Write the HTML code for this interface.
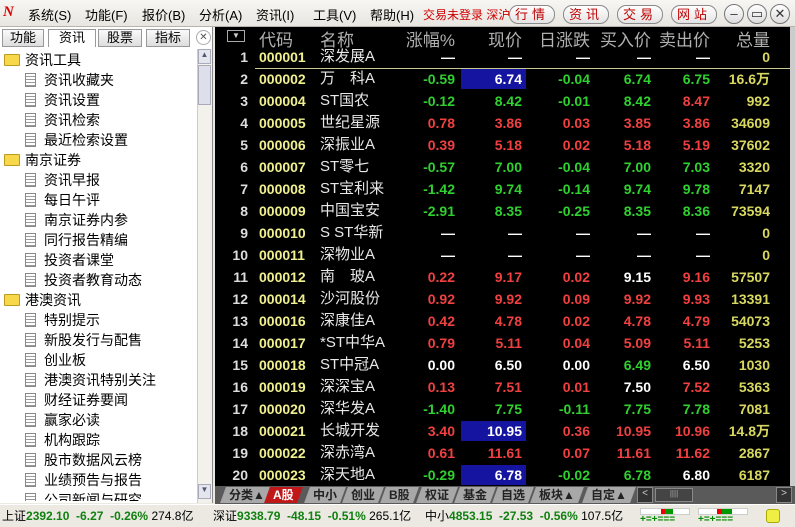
<!DOCTYPE html>
<html><head><meta charset="utf-8"><style>
*{margin:0;padding:0;box-sizing:border-box}
body{width:795px;height:526px;overflow:hidden;background:#ece9e3;font-family:"Liberation Sans","Noto Sans CJK SC",sans-serif;position:relative}
.a{position:absolute;white-space:nowrap}
#top{left:0;top:0;width:795px;height:27px;background:linear-gradient(#f7f6f3,#e8e6e0);border-bottom:1px solid #b8b4aa}
.menu{top:5px;font-size:13px;color:#000}
.btn{top:5px;height:19px;border:1px solid #8a8a8a;border-radius:9px;background:linear-gradient(#fff,#e4e4e4);font-size:13px;color:#c00000;text-align:center;line-height:17px;letter-spacing:4px}
.circ{top:4px;width:20px;height:20px;border:1px solid #777;border-radius:50%;background:linear-gradient(#fff,#ddd);text-align:center;font-size:13px;line-height:18px;color:#333}
#left{left:0;top:27px;width:213px;height:476px;background:#fff;border-right:1px solid #888}
.tab{top:2px;height:18px;border:1px solid #999;background:linear-gradient(#fafafa,#ddd);font-size:13px;text-align:center;line-height:16px}
.tr{font-size:14px;color:#000;height:20px;line-height:20px}
.fold{display:inline-block;width:16px;height:12px;background:#f7d84a;border:1px solid #b99a1c;border-radius:1px;vertical-align:-1px;margin-right:5px}
.doc{display:inline-block;width:11px;height:14px;border:1px solid #888;background:repeating-linear-gradient(#fff 0 2px,#999 2px 3px);vertical-align:-2px;margin-right:8px}
#tbl{left:215px;top:27px;width:575px;height:459px;background:#000}
.h{top:-1px;font-size:17px;color:#b0b0b0}
.r{font-size:14px;font-weight:bold;height:22px;line-height:22px}
.g{color:#30d030}.rd{color:#f04040}.w{color:#fff}.y{color:#d8d860}.cy{color:#f0f090}.nm{color:#e8e8e8;font-weight:normal;font-size:15px}
.bl{background:#1414a0}
#tabs{left:215px;top:486px;width:580px;height:18px;background:#5a5a5a}
.bt{top:1px;height:16px;background:#a8a8a8;font-size:12px;font-weight:bold;color:#222;line-height:16px;padding:0 6px;transform:skewX(-20deg)}
.bt span{display:inline-block;transform:skewX(20deg)}
#st{left:0;top:504px;width:795px;height:22px;background:#ece9e3;border-top:1px solid #fff;font-size:12px;line-height:22px}
.sg{color:#108010;font-weight:bold}
</style></head><body>
<div id="top" class="a"></div>
<div class="a" style="left:3px;top:4px;font:bold italic 15px 'Liberation Serif';color:#d00">N</div>
<div class="a menu" style="left:28px">系统(S)</div>
<div class="a menu" style="left:85px">功能(F)</div>
<div class="a menu" style="left:142px">报价(B)</div>
<div class="a menu" style="left:199px">分析(A)</div>
<div class="a menu" style="left:256px">资讯(I)</div>
<div class="a menu" style="left:313px">工具(V)</div>
<div class="a menu" style="left:370px">帮助(H)</div>
<div class="a menu" style="left:423px;color:#d00000;font-size:12px;top:6px">交易未登录 深沪</div>
<div class="a btn" style="left:509px;width:46px">行情</div>
<div class="a btn" style="left:563px;width:46px">资讯</div>
<div class="a btn" style="left:617px;width:46px">交易</div>
<div class="a btn" style="left:671px;width:46px">网站</div>
<div class="a circ" style="left:724px">–</div>
<div class="a circ" style="left:747px">▭</div>
<div class="a circ" style="left:770px">✕</div>

<div id="left" class="a">
<div class="a tab" style="left:2px;width:42px">功能</div>
<div class="a tab" style="left:48px;width:48px;background:#fff;border-bottom:none">资讯</div>
<div class="a tab" style="left:98px;width:44px">股票</div>
<div class="a tab" style="left:146px;width:44px">指标</div>
<div class="a" style="left:196px;top:3px;width:15px;height:15px;border-radius:50%;border:1px solid #aaa;font-size:10px;text-align:center;line-height:13px;color:#555">✕</div>
<div class="a" style="left:0;top:22px;width:197px;height:452px;overflow:hidden">
<div class="a" style="left:4px;top:1px">
<div class="tr"><span class="fold"></span>资讯工具</div>
<div class="tr" style="padding-left:21px"><span class="doc"></span>资讯收藏夹</div>
<div class="tr" style="padding-left:21px"><span class="doc"></span>资讯设置</div>
<div class="tr" style="padding-left:21px"><span class="doc"></span>资讯检索</div>
<div class="tr" style="padding-left:21px"><span class="doc"></span>最近检索设置</div>
<div class="tr"><span class="fold"></span>南京证券</div>
<div class="tr" style="padding-left:21px"><span class="doc"></span>资讯早报</div>
<div class="tr" style="padding-left:21px"><span class="doc"></span>每日午评</div>
<div class="tr" style="padding-left:21px"><span class="doc"></span>南京证券内参</div>
<div class="tr" style="padding-left:21px"><span class="doc"></span>同行报告精编</div>
<div class="tr" style="padding-left:21px"><span class="doc"></span>投资者课堂</div>
<div class="tr" style="padding-left:21px"><span class="doc"></span>投资者教育动态</div>
<div class="tr"><span class="fold"></span>港澳资讯</div>
<div class="tr" style="padding-left:21px"><span class="doc"></span>特别提示</div>
<div class="tr" style="padding-left:21px"><span class="doc"></span>新股发行与配售</div>
<div class="tr" style="padding-left:21px"><span class="doc"></span>创业板</div>
<div class="tr" style="padding-left:21px"><span class="doc"></span>港澳资讯特别关注</div>
<div class="tr" style="padding-left:21px"><span class="doc"></span>财经证券要闻</div>
<div class="tr" style="padding-left:21px"><span class="doc"></span>赢家必读</div>
<div class="tr" style="padding-left:21px"><span class="doc"></span>机构跟踪</div>
<div class="tr" style="padding-left:21px"><span class="doc"></span>股市数据风云榜</div>
<div class="tr" style="padding-left:21px"><span class="doc"></span>业绩预告与报告</div>
<div class="tr" style="padding-left:21px"><span class="doc"></span>公司新闻与研究</div>
</div></div>
<div class="a" style="left:197px;top:22px;width:15px;height:454px;background:#f2f1ec;border-left:1px solid #ccc"></div>
<div class="a" style="left:198px;top:22px;width:13px;height:15px;background:#e4e6ee;border:1px solid #aab;font-size:8px;text-align:center;color:#557">▲</div>
<div class="a" style="left:198px;top:38px;width:13px;height:40px;background:#dde0ea;border:1px solid #aab"></div>
<div class="a" style="left:198px;top:457px;width:13px;height:15px;background:#e4e6ee;border:1px solid #aab;font-size:8px;text-align:center;color:#557">▼</div>
</div>

<div id="tbl" class="a">
<div class="a" style="left:12px;top:3px;width:18px;height:12px;border:1px solid #aaa;color:#ccc;font-size:8px;text-align:center;line-height:10px">▼</div>
<div class="a h" style="left:44px">代码</div>
<div class="a h" style="left:105px">名称</div>
<div class="a h" style="right:335px">涨幅%</div>
<div class="a h" style="right:268px">现价</div>
<div class="a h" style="right:200px">日涨跌</div>
<div class="a h" style="right:139px">买入价</div>
<div class="a h" style="right:80px">卖出价</div>
<div class="a h" style="right:20px">总量</div>
<div class="a" style="left:40px;top:41px;width:540px;height:1px;background:#c8c890"></div>
<div id="rows"></div>
</div>
<div class="a" style="left:790px;top:27px;width:5px;height:459px;background:#ccc"></div>

<div id="tabs" class="a">
<div class="a bt" style="left:8px"><span>分类▲</span></div>
<div class="a bt" style="left:52px;background:#c01818;color:#fff"><span>A股</span></div>
<div class="a bt" style="left:92px"><span>中小</span></div>
<div class="a bt" style="left:130px"><span>创业</span></div>
<div class="a bt" style="left:168px"><span>B股</span></div>
<div class="a bt" style="left:204px"><span>权证</span></div>
<div class="a bt" style="left:242px"><span>基金</span></div>
<div class="a bt" style="left:280px"><span>自选</span></div>
<div class="a bt" style="left:318px"><span>板块▲</span></div>
<div class="a bt" style="left:370px"><span>自定▲</span></div>
<div class="a" style="left:422px;top:1px;width:16px;height:16px;background:#333;border:1px solid #888;color:#ccc;font-size:10px;text-align:center">&lt;</div>
<div class="a" style="left:440px;top:2px;width:38px;height:14px;background:#444;border:1px solid #888;color:#aaa;font-size:8px;text-align:center">||||</div>
<div class="a" style="left:561px;top:1px;width:16px;height:16px;background:#333;border:1px solid #888;color:#ccc;font-size:10px;text-align:center">&gt;</div>
</div>

<div id="st" class="a">
<span class="a" style="left:2px">上证<span class="sg">2392.10 &nbsp;-6.27 &nbsp;-0.26%</span> 274.8亿</span>
<span class="a" style="left:213px">深证<span class="sg">9338.79 &nbsp;-48.15 &nbsp;-0.51%</span> 265.1亿</span>
<span class="a" style="left:425px">中小<span class="sg">4853.15 &nbsp;-27.53 &nbsp;-0.56%</span> 107.5亿</span>
<div class="a" style="left:640px;top:3px;width:50px;height:7px;border:1px solid #ccc;background:#fff"><div class="a" style="left:20px;width:4px;height:5px;background:#e00"></div><div class="a" style="left:24px;width:8px;height:5px;background:#090"></div></div>
<div class="a" style="left:640px;top:10px;font-size:10px;color:#080;font-weight:bold;line-height:10px">+=+===</div>
<div class="a" style="left:698px;top:3px;width:50px;height:7px;border:1px solid #ccc;background:#fff"><div class="a" style="left:18px;width:5px;height:5px;background:#e00"></div><div class="a" style="left:23px;width:10px;height:5px;background:#090"></div></div>
<div class="a" style="left:698px;top:10px;font-size:10px;color:#080;font-weight:bold;line-height:10px">+=+===</div>
<div class="a" style="left:766px;top:4px;width:14px;height:14px;background:#ee4;border:1px solid #aa0;border-radius:3px"></div>
</div>

<script>
var D=[
["000001","深发展A","—w","—w","—w","—w","—w","0"],
["000002","万　科A","-0.59g","6.74B","-0.04g","6.74g","6.75g","16.6万"],
["000004","ST国农","-0.12g","8.42g","-0.01g","8.42g","8.47r","992"],
["000005","世纪星源","0.78r","3.86r","0.03r","3.85r","3.86r","34609"],
["000006","深振业A","0.39r","5.18r","0.02r","5.18r","5.19r","37602"],
["000007","ST零七","-0.57g","7.00g","-0.04g","7.00g","7.03g","3320"],
["000008","ST宝利来","-1.42g","9.74g","-0.14g","9.74g","9.78g","7147"],
["000009","中国宝安","-2.91g","8.35g","-0.25g","8.35g","8.36g","73594"],
["000010","S ST华新","—w","—w","—w","—w","—w","0"],
["000011","深物业A","—w","—w","—w","—w","—w","0"],
["000012","南　玻A","0.22r","9.17r","0.02r","9.15w","9.16r","57507"],
["000014","沙河股份","0.92r","9.92r","0.09r","9.92r","9.93r","13391"],
["000016","深康佳A","0.42r","4.78r","0.02r","4.78r","4.79r","54073"],
["000017","*ST中华A","0.79r","5.11r","0.04r","5.09r","5.11r","5253"],
["000018","ST中冠A","0.00w","6.50w","0.00w","6.49g","6.50w","1030"],
["000019","深深宝A","0.13r","7.51r","0.01r","7.50w","7.52r","5363"],
["000020","深华发A","-1.40g","7.75g","-0.11g","7.75g","7.78g","7081"],
["000021","长城开发","3.40r","10.95B","0.36r","10.95r","10.96r","14.8万"],
["000022","深赤湾A","0.61r","11.61r","0.07r","11.61r","11.62r","2867"],
["000023","深天地A","-0.29g","6.78B","-0.02g","6.78g","6.80w","6187"]];
var R=[335,268,200,139,80,20],h="";
D.forEach(function(d,i){var t=19+i*22;
h+='<div class="a r w" style="right:542px;top:'+t+'px;color:#ddd">'+(i+1)+'</div>';
h+='<div class="a r cy" style="left:44px;top:'+t+'px">'+d[0]+'</div>';
h+='<div class="a r nm" style="left:105px;top:'+t+'px">'+d[1]+'</div>';
for(var k=0;k<5;k++){var v=d[k+2],c=v.slice(-1),s=v.slice(0,-1),cl={g:"g",r:"rd",w:"w",B:"w"}[c];
if(c=="B")h+='<div class="a bl" style="left:246px;top:'+(t+1)+'px;width:65px;height:20px"></div>';
h+='<div class="a r '+cl+'" style="right:'+R[k]+'px;top:'+t+'px">'+s+'</div>';}
h+='<div class="a r y" style="right:20px;top:'+t+'px">'+d[7]+'</div>';});
document.getElementById("rows").innerHTML=h;
</script>
</body></html>
